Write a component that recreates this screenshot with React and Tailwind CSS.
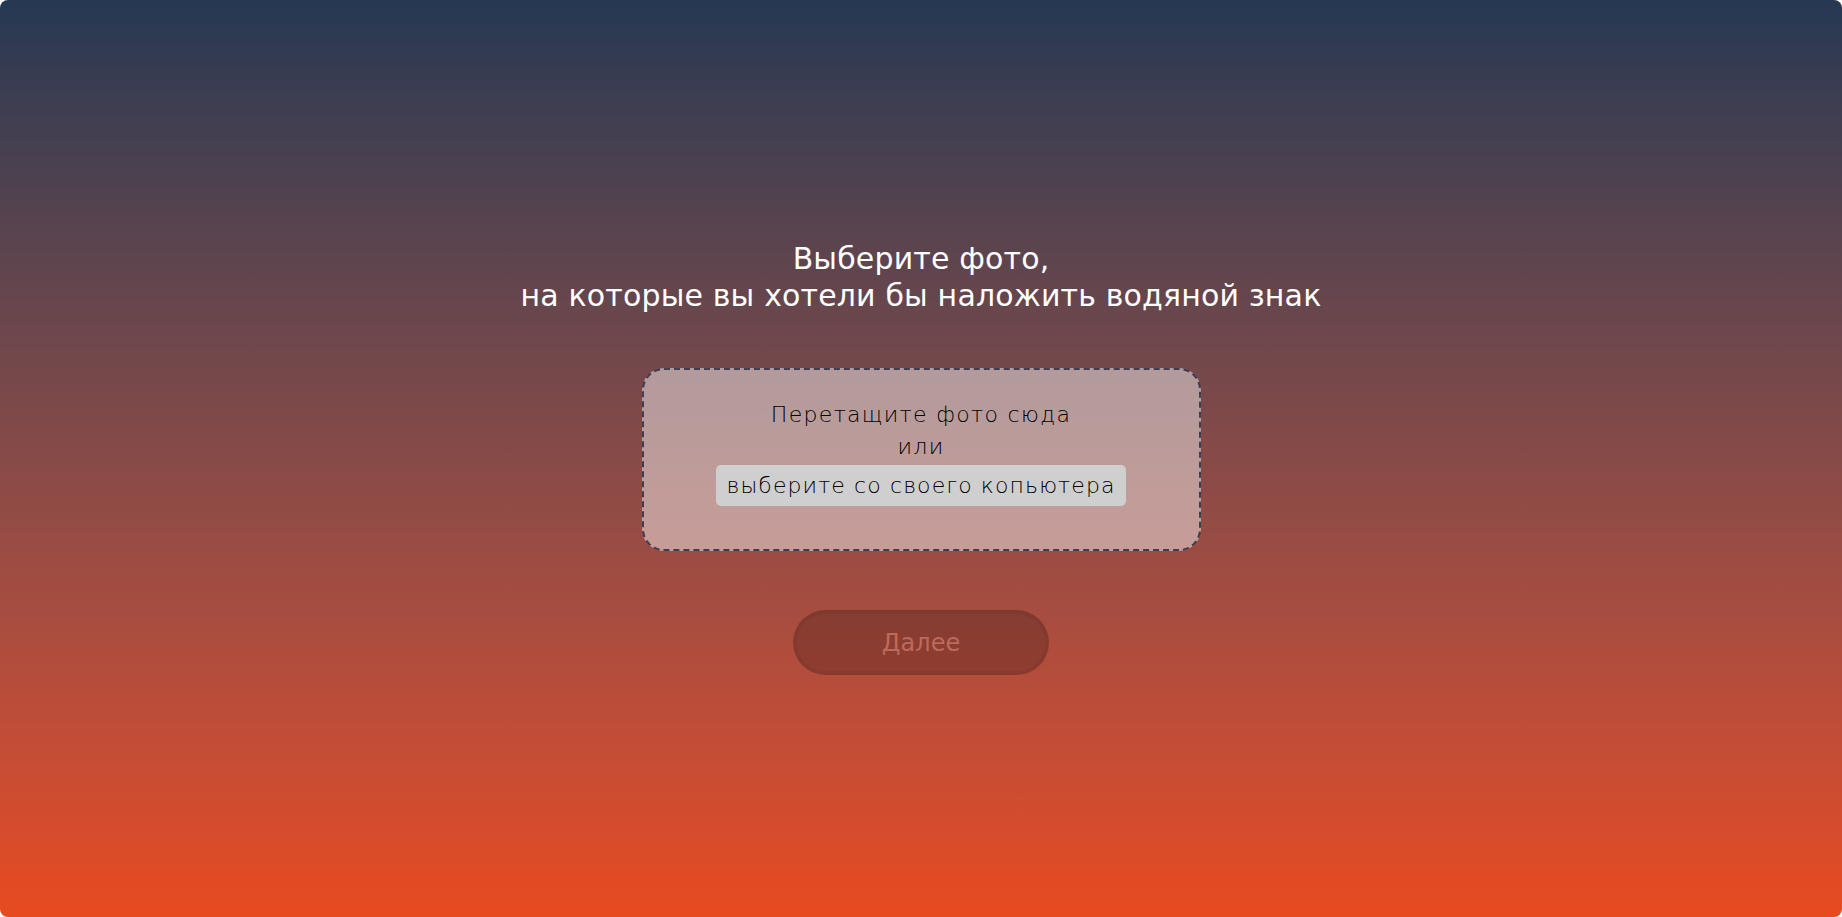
import React from 'react';

export default function App() {
  return (
    <div className="min-h-screen bg-white" style={{ fontFamily: '"DejaVu Sans", sans-serif' }}>
      <div className="h-[917px] rounded-lg bg-gradient-to-b from-[#253852] to-[#e84a1e] flex flex-col items-center pt-[240px]">
        {/* Heading */}
        <h1 className="text-white text-center text-[30px] leading-[37px] font-normal tracking-[0.005em]">
          Выберите фото,
          <br />
          на которые вы хотели бы наложить водяной знак
        </h1>

        {/* Drop zone */}
        <div className="mt-[54px] w-[559px] h-[183px] rounded-[22px] border-2 border-dashed border-[#3b3f55] bg-white/45 flex flex-col items-center pt-[29px]">
          <p className="text-black text-[22px] leading-[32px] font-light tracking-[0.06em]">Перетащите фото сюда</p>
          <p className="text-black text-[22px] leading-[32px] font-light tracking-[0.06em]">или</p>
          <button className="mt-[2px] h-[41px] px-[10px] rounded-[5px] bg-[#cfcfcf] text-black text-[22px] font-light tracking-[0.05em]">
            выберите со своего копьютера
          </button>
        </div>

        {/* Next button */}
        <button className="mt-[59px] w-[256px] h-[65px] rounded-full bg-black/20 border-4 border-black/5 text-[#bc6a5c] text-[24px] font-medium">
          Далее
        </button>
      </div>
    </div>
  );
}
